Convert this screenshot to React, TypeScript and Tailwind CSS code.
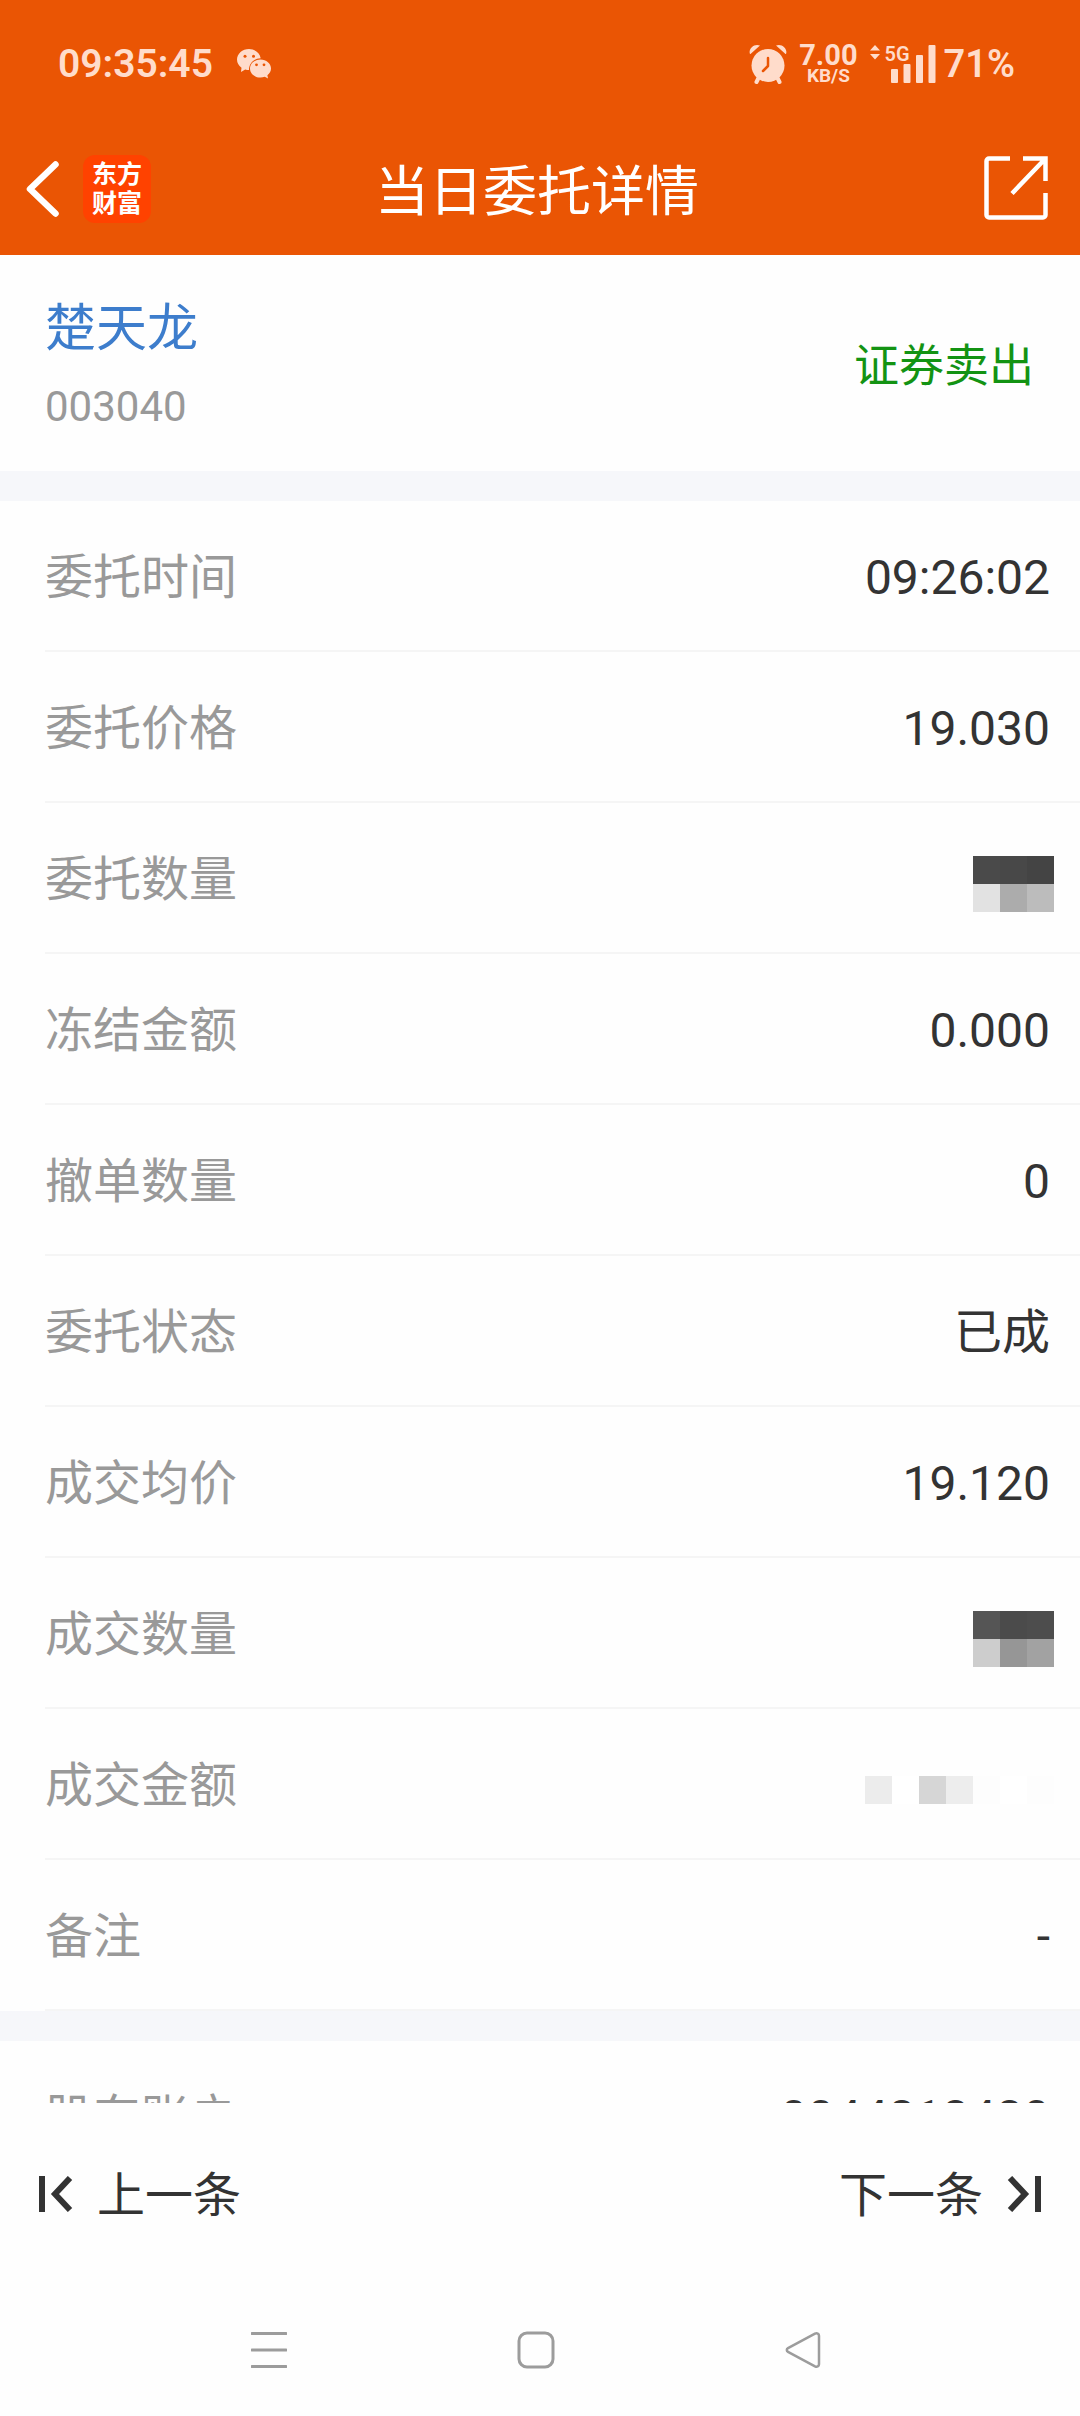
import type { ReactNode } from "react";

type Row = { label: string; value: ReactNode };

function Mosaic({ rows }: { rows: string[][] }) {
  return (
    <span className="-mr-1 flex flex-col pt-2" role="img" aria-label="已隐藏">
      {rows.map((cells, i) => (
        <span key={i} className="flex">
          {cells.map((cell, j) => (
            <span key={j} className={`h-7 w-[27px] ${cell}`} />
          ))}
        </span>
      ))}
    </span>
  );
}

const rows: Row[] = [
  { label: "委托时间", value: "09:26:02" },
  { label: "委托价格", value: "19.030" },
  {
    label: "委托数量",
    value: (
      <Mosaic
        rows={[
          ["bg-[#4a4a4a]", "bg-[#484848]", "bg-[#444444]"],
          ["bg-[#e2e2e2]", "bg-[#acacac]", "bg-[#bcbcbc]"],
        ]}
      />
    ),
  },
  { label: "冻结金额", value: "0.000" },
  { label: "撤单数量", value: "0" },
  { label: "委托状态", value: "已成" },
  { label: "成交均价", value: "19.120" },
  {
    label: "成交数量",
    value: (
      <Mosaic
        rows={[
          ["bg-[#555555]", "bg-[#4b4b4b]", "bg-[#4d4d4d]"],
          ["bg-[#cdcdcd]", "bg-[#969696]", "bg-[#a2a2a2]"],
        ]}
      />
    ),
  },
  {
    label: "成交金额",
    value: (
      <Mosaic
        rows={[
          [
            "bg-[#ececec]",
            "bg-white",
            "bg-[#d6d6d6]",
            "bg-[#ededed]",
            "bg-[#fdfdfd]",
            "bg-white",
            "bg-[#fdfdfd]",
          ],
        ]}
      />
    ),
  },
  { label: "备注", value: "-" },
];

function StatusBar() {
  return (
    <div className="flex h-[128px] items-center justify-between pr-[65px] pl-[58px] text-[#ffdccb]">
      <div className="flex items-center gap-6">
        <span className="text-[39px] leading-none font-semibold">09:35:45</span>
        <svg width="34" height="30" viewBox="0 0 34 30" fill="currentColor">
          <path d="M12 0C5.400 0 0 4.700 0 10.500c0 3.400 1.700 6.200 4.500 8.200L4 23l4.200-2.500c1.200.4 2.500.6 3.800.6-.2-6.500 4.800-11.700 11.700-11.900C22.800 3.900 17.900 0 12 0Z" />
          <path d="M23.500 10.400c-5.800 0-10.500 4.100-10.500 9.200s4.700 9 10.500 9c1.600 0 3-.3 4.300-.8L31 29.500l-.6-3.200c2.200-1.700 3.600-4 3.600-6.700 0-5.100-4.700-9.200-10.500-9.200Z" />
          <g fill="#ea5504">
            <circle cx="8" cy="7.300" r="1.500" />
            <circle cx="16.500" cy="7.300" r="1.500" />
            <circle cx="19.500" cy="15.800" r="1.400" />
            <circle cx="27" cy="15.800" r="1.400" />
          </g>
        </svg>
      </div>
      <div className="flex items-center">
        <svg width="38" height="40" viewBox="0 0 38 40" fill="currentColor">
          <path d="M1 10C-1 5 5-1 11 1.500L1.500 10ZM37 10C39 5 33-1 27 1.500L36.500 10Z" />
          <circle cx="19" cy="21.500" r="16.500" />
          <path
            d="m9 35-1.500 3M29 35l1.500 3"
            stroke="currentColor"
            strokeWidth="4"
            strokeLinecap="round"
          />
          <path
            d="M19 14v8l-5 5"
            fill="none"
            stroke="#ea5504"
            strokeWidth="2.500"
            strokeLinecap="round"
            strokeLinejoin="round"
          />
        </svg>
        <div className="ml-3 flex flex-col items-center font-bold">
          <span className="text-[29px] leading-[24px]">7.00</span>
          <span className="text-[19px] leading-[18px]">KB/S</span>
        </div>
        <div className="relative ml-3">
          <svg width="66" height="40" viewBox="0 0 66 40" fill="currentColor">
            <path d="M0 6.500 5 1l5 5.500ZM0 10h10l-5 5.500Z" />
            <rect x="21" y="25" width="7" height="14" rx="1" />
            <rect x="33.500" y="20" width="7" height="19" rx="1" />
            <rect x="46" y="11" width="7" height="28" rx="1" />
            <rect x="58.500" y="1" width="7" height="38" rx="1" />
          </svg>
          <span className="absolute -top-0.5 left-[15px] text-[20px] leading-6 font-semibold">
            5G
          </span>
        </div>
        <span className="ml-2 text-[38px] leading-none font-semibold">71%</span>
      </div>
    </div>
  );
}

function NavBar() {
  return (
    <div className="grid h-[127px] grid-cols-[1fr_auto_1fr] items-start pt-[27px] pr-8 pl-[26px] text-white">
      <div className="flex items-center gap-6">
        <button aria-label="返回">
          <svg width="33" height="56" viewBox="0 0 33 56" fill="none">
            <path
              d="M29.500 3.500 4 28l25.500 24.500"
              stroke="currentColor"
              strokeWidth="6.500"
              strokeLinecap="round"
              strokeLinejoin="round"
            />
          </svg>
        </button>
        <div className="flex size-[68px] flex-col items-center justify-center rounded-xl bg-[#ff4200] text-[25px] leading-[29px] font-bold">
          <span>东方</span>
          <span>财富</span>
        </div>
      </div>
      <h1 className="text-[54px] leading-[76px]">当日委托详情</h1>
      <button aria-label="分享" className="justify-self-end">
        <svg width="64" height="66" viewBox="0 0 64 66" fill="none">
          <path
            d="M26 3.500H5a2.500 2.500 0 0 0-2.500 2.500v54A2.500 2.500 0 0 0 5 62.500h54a2.500 2.500 0 0 0 2.500-2.500V38M39 3.500h22.500V26M61 4 28 38.500"
            stroke="currentColor"
            strokeWidth="4.500"
          />
        </svg>
      </button>
    </div>
  );
}

function DetailRow({ label, value }: Row) {
  return (
    <div className="ml-[45px] flex h-[151px] items-center justify-between border-b-2 border-[#f5f5f5] pt-1 pr-[30px] text-[48px] leading-[72px]">
      <dt className="text-[#999999]">{label}</dt>
      <dd className="text-[#333333]">{value}</dd>
    </div>
  );
}

function SkipIcon({ className }: { className?: string }) {
  return (
    <svg
      className={className}
      width="34"
      height="36"
      viewBox="0 0 34 36"
      fill="none"
      stroke="currentColor"
      strokeWidth="6"
    >
      <path d="M3 0v36M31 2 16 18l15 16" />
    </svg>
  );
}

export default function App() {
  return (
    <div className="flex min-h-screen flex-col bg-[#fefefe] font-[Roboto,'Noto_Sans_CJK_SC',sans-serif]">
      <header className="bg-[#ea5504]">
        <StatusBar />
        <NavBar />
      </header>

      <main className="flex-1">
        <section className="flex h-[216px] items-center justify-between pr-[46px] pl-[45px]">
          <div className="pt-3">
            <a href="#" className="block text-[51px] leading-[76px] text-[#3d7dcc]">
              楚天龙
            </a>
            <p className="text-[42px] leading-[80px] text-[#999999]">003040</p>
          </div>
          <span className="pt-2 text-[45px] text-[#139313]">证券卖出</span>
        </section>

        <dl className="border-y-30 border-[#f6f7fa]">
          {rows.map((row) => (
            <DetailRow key={row.label} {...row} />
          ))}
        </dl>

        {/* next group scrolls under the bottom bar */}
        <dl className="h-[62px] overflow-hidden">
          <DetailRow label="股东账户" value="0044818480" />
        </dl>
      </main>

      <footer className="bg-[#fefefe]">
        <div className="flex h-[181px] items-center justify-between px-[39px] text-[48px] text-[#333333]">
          <button className="flex items-center gap-6">
            <SkipIcon />
            <span className="pt-1">上一条</span>
          </button>
          <button className="flex items-center gap-6">
            <span className="pt-1">下一条</span>
            <SkipIcon className="rotate-180" />
          </button>
        </div>
        <nav className="flex h-[132px] items-center justify-between pr-[259px] pl-[251px] text-[#9c9c9c]">
          <button aria-label="最近任务">
            <svg width="36" height="38" viewBox="0 0 36 38" fill="none">
              <path
                d="M1 2.500h34M1 19h34M1 35.500h34"
                stroke="currentColor"
                strokeWidth="3"
                strokeLinecap="round"
              />
            </svg>
          </button>
          <button aria-label="主屏幕">
            <svg width="38" height="38" viewBox="0 0 38 38" fill="none">
              <rect
                x="2"
                y="2"
                width="34"
                height="34"
                rx="8"
                stroke="currentColor"
                strokeWidth="3"
              />
            </svg>
          </button>
          <button aria-label="系统返回">
            <svg width="36" height="38" viewBox="0 0 36 38" fill="none">
              <path
                d="M3 17.200 30 2.700c2-1 4 0 4 2v28.600c0 2-2 3-4 2L3 20.800c-1.600-.9-1.600-2.700 0-3.600Z"
                stroke="currentColor"
                strokeWidth="2.500"
              />
            </svg>
          </button>
        </nav>
      </footer>
    </div>
  );
}
